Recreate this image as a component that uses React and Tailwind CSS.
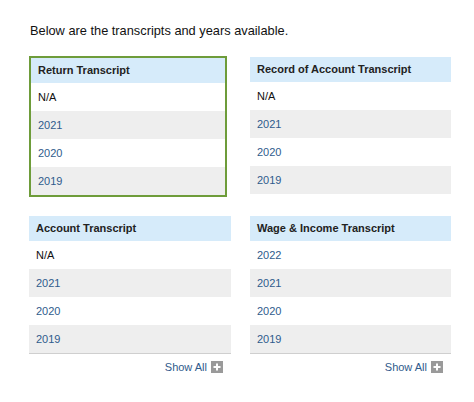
const panels = [
  { title: "Return Transcript", rows: ["N/A", "2021", "2020", "2019"], selected: true },
  { title: "Record of Account Transcript", rows: ["N/A", "2021", "2020", "2019"] },
  { title: "Account Transcript", rows: ["N/A", "2021", "2020", "2019"], showAll: true },
  { title: "Wage & Income Transcript", rows: ["2022", "2021", "2020", "2019"], showAll: true },
];

function Panel({ title, rows, selected, showAll }) {
  return (
    <div>
      <div
        className={
          selected
            ? "w-[198px] border-2 border-[#6e9c3a] -mt-[1px]"
            : "w-full"
        }
      >
        <div className="h-[25px] flex items-center px-[7px] bg-[#d6ebfa] text-[11px] font-bold text-[#222]">
          {title}
        </div>
        {rows.map((r, i) => (
          <div
            key={r}
            className={
              "h-[28px] flex items-center px-[7px] text-[11px] " +
              (i % 2 === 1 ? "bg-[#eeeeee] " : "bg-white ") +
              (r === "N/A" ? "text-[#111]" : "text-[#2f5b8c]")
            }
          >
            {r}
          </div>
        ))}
      </div>
      {showAll && (
        <>
          <div className="h-px bg-[#cfcfcf]" />
          <div className="flex justify-end items-center gap-[4px] pr-[8px] pt-[5px] text-[11px] text-[#2f5b8c]">
            <span>Show All</span>
            <span className="w-[12px] h-[12px] bg-[#9a9a9a] flex items-center justify-center">
              <svg width="8" height="8" viewBox="0 0 8 8">
                <path d="M4 0.5v7M0.5 4h7" stroke="#fff" strokeWidth="2" />
              </svg>
            </span>
          </div>
        </>
      )}
    </div>
  );
}

export default function App() {
  return (
    <div
      className="w-[474px] h-[402px] bg-white pl-[29px] pt-[23px]"
      style={{ fontFamily: '"Liberation Sans", Arial, sans-serif' }}
    >
      <p className="text-[12.8px] leading-[16px] text-[#111] pl-[1px]">
        Below are the transcripts and years available.
      </p>
      <div className="grid grid-cols-[202px_201px] gap-x-[19px] gap-y-[19px] mt-[18px]">
        {panels.map((p) => (
          <Panel key={p.title} {...p} />
        ))}
      </div>
    </div>
  );
}
